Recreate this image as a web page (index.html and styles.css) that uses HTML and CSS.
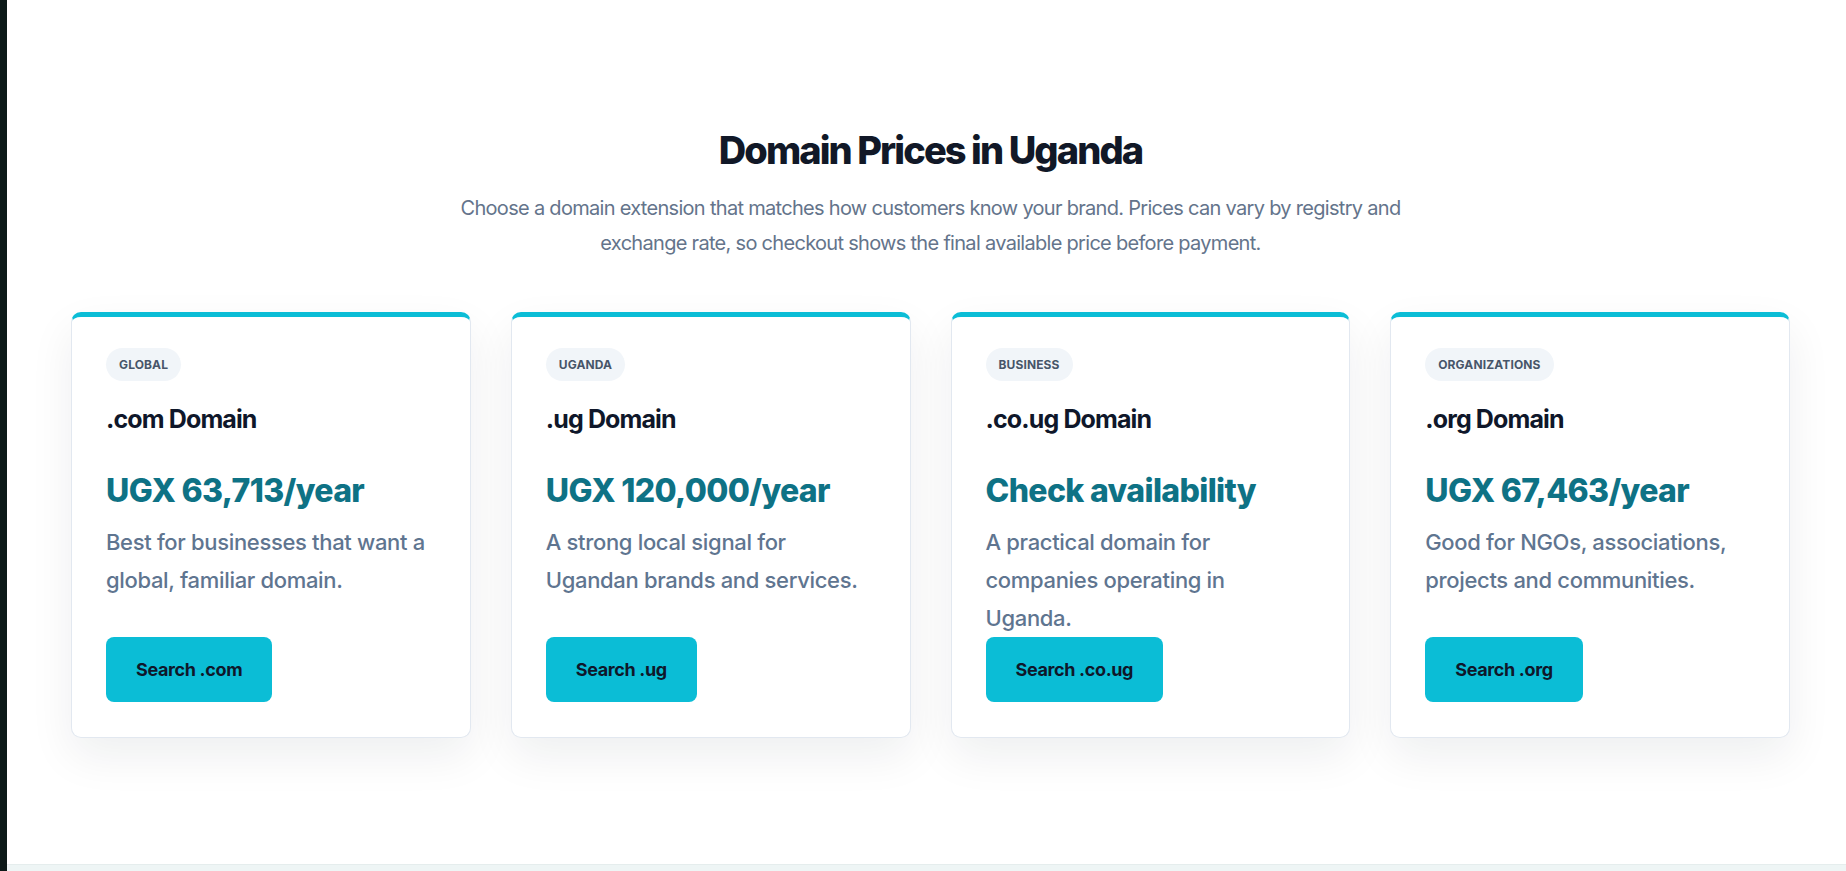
FILE: index.html
```html
<!DOCTYPE html>
<html lang="en">
<head>
    <meta charset="UTF-8">
    <title>Domain Prices in Uganda</title>
    <link rel="stylesheet" href="styles.css">
</head>
<body>
    <div class="page">
        <section class="pricing">
            <div class="pricing-head">
                <h2>Domain Prices in Uganda</h2>
                <p>Choose a domain extension that matches how customers know your brand. Prices can vary by registry and exchange rate, so checkout shows the final available price before payment.</p>
            </div>

            <div class="plans">
                <article class="plan">
                    <span class="plan-tag">Global</span>
                    <h3>.com Domain</h3>
                    <div class="plan-price">UGX 63,713/year</div>
                    <p class="plan-text">Best for businesses that want a global, familiar domain.</p>
                    <a href="#" class="plan-btn">Search .com</a>
                </article>

                <article class="plan">
                    <span class="plan-tag">Uganda</span>
                    <h3>.ug Domain</h3>
                    <div class="plan-price">UGX 120,000/year</div>
                    <p class="plan-text">A strong local signal for Ugandan brands and services.</p>
                    <a href="#" class="plan-btn">Search .ug</a>
                </article>

                <article class="plan">
                    <span class="plan-tag">Business</span>
                    <h3>.co.ug Domain</h3>
                    <div class="plan-price">Check availability</div>
                    <p class="plan-text">A practical domain for companies operating in Uganda.</p>
                    <a href="#" class="plan-btn">Search .co.ug</a>
                </article>

                <article class="plan">
                    <span class="plan-tag">Organizations</span>
                    <h3>.org Domain</h3>
                    <div class="plan-price">UGX 67,463/year</div>
                    <p class="plan-text">Good for NGOs, associations, projects and communities.</p>
                    <a href="#" class="plan-btn">Search .org</a>
                </article>
            </div>
        </section>

        <div class="next-section"></div>
    </div>
</body>
</html>
```

FILE: styles.css
```css
:root {
    --ink: #0f172a;
    --muted: #64748b;
    --cyan: #0bbdd6;
    --teal: #0e7285;
    --line: #e2e8f0;
}

* {
    box-sizing: border-box;
}

body {
    margin: 0;
    background: #fff;
    color: var(--ink);
    font-family: Inter, "Noto Sans", sans-serif;
    overflow: hidden;
}

.page {
    border-left: 7px solid #0c1918;
    min-height: 100vh;
}

.pricing {
    padding: 127px 56px 126px 64px;
}

.pricing-head {
    text-align: center;
}

.pricing-head h2 {
    margin: 0 0 18px;
    font-size: 38px;
    line-height: 46px;
    font-weight: 800;
    letter-spacing: -0.05em;
    color: #111827;
}

.pricing-head p {
    max-width: 960px;
    margin: 0 auto 51px;
    font-size: 20px;
    line-height: 35px;
    font-weight: 400;
    letter-spacing: -0.035em;
    color: var(--muted);
}

.plans {
    display: grid;
    grid-template-columns: repeat(4, 1fr);
    gap: 40px;
}

.plan {
    display: flex;
    flex-direction: column;
    align-items: flex-start;
    padding: 31px 34px 35px;
    background: #fff;
    border: 1px solid var(--line);
    border-top: 5px solid var(--cyan);
    border-radius: 10px;
    box-shadow: 0 18px 45px rgba(15, 23, 42, 0.07);
}

.plan-tag {
    display: inline-block;
    padding: 8px 13px;
    border-radius: 999px;
    background: #f1f5f9;
    color: #475569;
    font-size: 12px;
    line-height: 17px;
    font-weight: 700;
    text-transform: uppercase;
    letter-spacing: 0.01em;
}

.plan h3 {
    margin: 22px 0 37px;
    font-size: 25px;
    line-height: 32px;
    font-weight: 700;
    letter-spacing: -0.035em;
    color: var(--ink);
}

.plan-price {
    font-size: 32px;
    line-height: 38px;
    font-weight: 800;
    letter-spacing: -0.02em;
    color: var(--teal);
}

.plan-text {
    margin: 13px 0 0;
    font-size: 22px;
    line-height: 38px;
    font-weight: 500;
    letter-spacing: -0.015em;
    color: #5f7590;
}

.plan-btn {
    margin-top: auto;
    display: inline-block;
    padding: 20px 30px;
    border-radius: 8px;
    background: var(--cyan);
    color: var(--ink);
    font-size: 18px;
    line-height: 25px;
    font-weight: 700;
    letter-spacing: -0.02em;
    text-decoration: none;
}

.next-section {
    height: 40px;
    border-top: 1px solid #e5eded;
    background: #eef5f5;
}
```
